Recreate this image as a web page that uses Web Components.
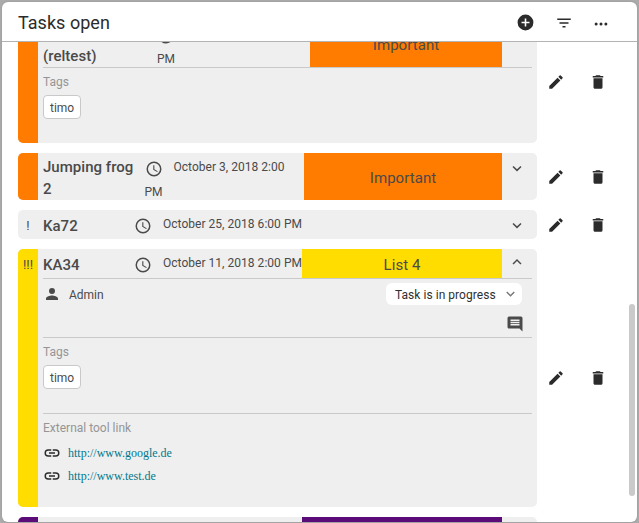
<!DOCTYPE html>
<html lang="en"><head><meta charset="utf-8"><title>Tasks open</title>
<style>
html,body{margin:0;height:100%;background:#ababab;overflow:hidden}
body{font-family:Roboto,"Liberation Sans",sans-serif;color:#4a4a4a}
</style></head><body>
<task-panel heading="Tasks open">
  <task-card color="#ff7c00" label="Important" style="--h:123px;--head:47px;--name:114px;--when:153px;--pad:3px" open>
    <span slot="name"><br>(reltest)</span>
    <task-date slot="date" two="PM"></task-date>
    <task-section heading="Tags" style="height:75px"><tag-chip>timo</tag-chip></task-section>
  </task-card>
  <task-card color="#ff7c00" label="Important" style="--h:47px;--head:47px;--name:101.5px;--when:159.5px;--pad:3px;--arrow:7px">
    <span slot="name">Jumping frog<br>2</span>
    <task-date slot="date" two="PM" text="October 3, 2018 2:00"></task-date>
  </task-card>
  <task-card priority="!" style="--h:29px;--head:29px;--name:91px;--when:168px;--arrow:7px">
    <span slot="name">Ka72</span><task-date slot="date" text="October 25, 2018 6:00 PM"></task-date>
  </task-card>
  <task-card color="#ffdd00" priority="!!!" label="List 4" style="--h:258px;--head:29px;--name:91px;--when:168px;--arrow:4px" open>
    <span slot="name">KA34</span><task-date slot="date" text="October 11, 2018 2:00 PM"></task-date>
    <task-status person="Admin" status="Task is in progress"></task-status>
    <task-section heading="Tags" line style="height:75px"><tag-chip>timo</tag-chip></task-section>
    <task-section heading="External tool link" line style="height:93px"><tool-link>http://www.google.de</tool-link><tool-link>http://www.test.de</tool-link></task-section>
  </task-card>
  <task-card color="#5c0c78" style="--h:47px;--head:47px;--name:91px;--when:168px"></task-card>
</task-panel>
<script>
const PATHS={
 add:'M12 2a10 10 0 1 0 0 20 10 10 0 0 0 0-20zm5 11h-4v4h-2v-4H7v-2h4V7h2v4h4v2z',
 filter:'M10 18h4v-2h-4v2zM3 6v2h18V6H3zm3 7h12v-2H6v2z',
 more:'M5.5 10a2 2 0 1 0 0 4 2 2 0 0 0 0-4zm13 0a2 2 0 1 0 0 4 2 2 0 0 0 0-4zm-6.5 0a2 2 0 1 0 0 4 2 2 0 0 0 0-4z',
 edit:'M3 17.25V21h3.75L17.81 9.94l-3.75-3.75L3 17.25zM20.71 7.04a1 1 0 0 0 0-1.41l-2.34-2.34a1 1 0 0 0-1.41 0l-1.83 1.83 3.75 3.75 1.83-1.83z',
 trash:'M6 19c0 1.1.9 2 2 2h8a2 2 0 0 0 2-2V7H6v12zM19 4h-3.5l-1-1h-5l-1 1H5v2h14V4z',
 clock:'M11.99 2a10 10 0 1 0 .02 20 10 10 0 0 0-.02-20zM12 20a8 8 0 1 1 0-16 8 8 0 0 1 0 16zm.5-13H11v6l5.25 3.15.75-1.23-4.5-2.67z',
 down:'M7.41 7.84 12 12.42l4.59-4.58L18 9.25l-6 6-6-6z',
 up:'M7.41 15.41 12 10.83l4.59 4.58L18 14l-6-6-6 6z',
 person:'M12 12a4 4 0 1 0 0-8 4 4 0 0 0 0 8zm0 2c-2.67 0-8 1.34-8 4v2h16v-2c0-2.66-5.33-4-8-4z',
 comment:'M21.99 4A2 2 0 0 0 20 2H4a2 2 0 0 0-2 2v12c0 1.1.9 2 2 2h14l4 4-.01-18zM18 14H6v-2h12v2zm0-3H6V9h12v2zm0-3H6V6h12v2z',
 link:'M3.9 12A3.1 3.1 0 0 1 7 8.9h4V7H7a5 5 0 0 0 0 10h4v-1.9H7A3.1 3.1 0 0 1 3.9 12zM8 13h8v-2H8v2zm9-6h-4v1.9h4a3.1 3.1 0 0 1 0 6.2h-4V17h4a5 5 0 0 0 0-10z'};
const define=(name,render)=>customElements.define(name,class extends HTMLElement{
 constructor(){super();this.attachShadow({mode:'open'})}
 connectedCallback(){this.shadowRoot.innerHTML=render(k=>this.getAttribute(k)||'',k=>this.hasAttribute(k))}
});
define('ui-icon',a=>`<style>:host{display:block;flex:none;width:${a('size')||18}px;height:${a('size')||18}px}svg{display:block;width:100%;height:100%}</style><svg viewBox="0 0 24 24" fill="currentColor"><path d="${PATHS[a('name')]}"/></svg>`);
define('task-panel',a=>`<style>
:host{display:flex;flex-direction:column;box-sizing:border-box;width:635px;height:520px;margin:2px;background:#fff;border-radius:6px;overflow:hidden;box-shadow:0 0 2px #8d8d8d}
header{display:flex;align-items:center;box-sizing:border-box;flex:none;height:40px;border-bottom:1px solid #b3b3b3;padding:0 27px 0 16px;color:#2b2b2b}
h1{flex:1;margin:0;font-size:18px;line-height:39px;font-weight:400;letter-spacing:.03px;padding-top:2px}
nav{display:flex;gap:19.5px;align-items:center;padding-top:2px}
main{display:flex;flex:1;min-height:0;overflow:hidden;justify-content:space-between;padding-right:2px}
.list{display:flex;flex-direction:column;gap:10px;margin-top:-22px;padding-left:16px}
.bar{flex:none;width:6px;height:192px;margin-top:262px;border-radius:3px;background:#cacaca}
.more{padding-top:3px}
</style><header><h1>${a('heading')}</h1><nav><ui-icon name="add" size="19"></ui-icon><ui-icon name="filter" size="18"></ui-icon><ui-icon class="more" name="more"></ui-icon></nav></header><main><div class="list"><slot></slot></div><div class="bar"></div></main>`);
define('task-card',(a,h)=>`<style>
:host{display:flex;flex:none;height:var(--h);align-items:center}
.card{display:flex;flex:none;width:519px;height:100%;background:#efefef;border-radius:5px;overflow:hidden}
.stripe{flex:none;width:20px;background:${a('color')||'transparent'};font-size:13px;line-height:31px;text-align:center}
.body{flex:1;padding:0 5px;min-width:0}
.head{display:flex;height:var(--head);border-bottom:${h('open')?'1px solid #c9c9c9':'0'}}
.name{flex:none;width:var(--name);font-size:15px;font-weight:500;line-height:22px;padding-top:var(--pad,5px);box-sizing:border-box;white-space:nowrap;letter-spacing:.03px}
.when{flex:none;width:var(--when)}
.label{flex:1;background:${a('color')||'transparent'};display:flex;align-items:center;justify-content:center;font-size:15px;letter-spacing:.05px;padding-top:2px;box-sizing:border-box}
.toggle{flex:none;width:30px;display:flex;justify-content:center;padding-top:var(--arrow,4px);box-sizing:border-box}
.acts{display:flex;gap:24px;padding:0 0 0 10px;color:#2b2b2b}
</style><div class="card"><div class="stripe">${a('priority')}</div><div class="body"><div class="head"><div class="name"><slot name="name"></slot></div><div class="when"><slot name="date"></slot></div><div class="label">${a('label')}</div><div class="toggle"><ui-icon name="${h('open')?'up':'down'}"></ui-icon></div></div><slot></slot></div></div><div class="acts"><ui-icon name="edit"></ui-icon><ui-icon name="trash"></ui-icon></div>`);
define('task-date',(a,h)=>`<style>:host{display:block;font-size:12px;line-height:20px;white-space:nowrap;letter-spacing:.03px}
.row{display:flex;align-items:flex-start;gap:11px;height:29px}.row ui-icon{padding-top:6.5px}.row span{padding-top:4px}</style>
<div class="row"><ui-icon name="clock"></ui-icon><span>${a('text')}</span></div>${h('two')?`<div>${a('two')}</div>`:''}`);
define('task-section',(a,h)=>`<style>:host{display:block;box-sizing:content-box;border-top:${h('line')?'1px solid #c9c9c9':'0'}}
h2{margin:0;font-size:12px;font-weight:400;line-height:16px;padding:6px 0 5px;color:#959595}</style><h2>${a('heading')}</h2><slot></slot>`);
define('tag-chip',()=>`<style>:host{display:inline-block;box-sizing:border-box;height:24px;border:1px solid #c9c9c9;border-radius:4px;background:#fff;padding:0 6px;font-size:12px;line-height:24px}</style><slot></slot>`);
define('tool-link',()=>`<style>:host{display:flex;align-items:center;height:23px;gap:7px;color:#2b2b2b}a{color:#00788c;font:12px/23px "Liberation Serif",serif;padding-top:2px}</style><ui-icon name="link"></ui-icon><a><slot></slot></a>`);
define('task-status',a=>`<style>:host{display:block;height:58px;font-size:12px}.top{display:flex;justify-content:space-between;padding:4px 10px 0 0;height:22px}
.who{display:flex;align-items:center;gap:8px}.who span,.pick span{padding-top:1px}.pick{display:flex;align-items:center;justify-content:space-between;box-sizing:border-box;width:136px;padding:0 3px 0 9px;background:#fff;border-radius:6px;color:#2f2f2f;white-space:nowrap;letter-spacing:.04px}.pick ui-icon{color:#777}.note{display:flex;justify-content:flex-end;padding:10px 8px 0 0}</style>
<div class="top"><div class="who"><ui-icon name="person"></ui-icon><span>${a('person')}</span></div><div class="pick"><span>${a('status')}</span><ui-icon name="down" size="17"></ui-icon></div></div><div class="note"><ui-icon name="comment"></ui-icon></div>`);
</script></body></html>
